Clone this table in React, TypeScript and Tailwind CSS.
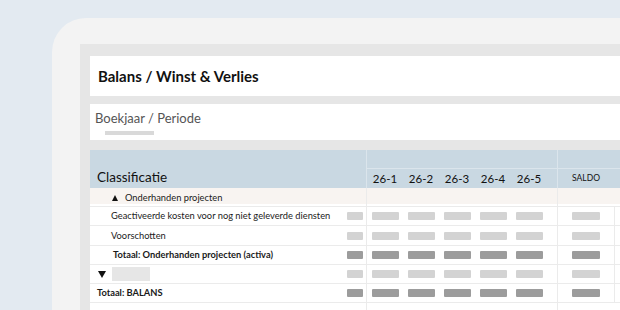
import React from "react";

const font = { fontFamily: "Lato, 'Open Sans', sans-serif" };

type Row = {
  kind: "group" | "item" | "total" | "collapsed" | "grand";
  label?: string;
  shade?: "light" | "dark";
  h: string;
};

const rows: Row[] = [
  { kind: "item", label: "Geactiveerde kosten voor nog niet geleverde diensten", shade: "light", h: "h-[18px]" },
  { kind: "item", label: "Voorschotten", shade: "light", h: "h-[19px]" },
  { kind: "total", label: "Totaal: Onderhanden projecten (activa)", shade: "dark", h: "h-[18px]" },
  { kind: "collapsed", shade: "light", h: "h-[18px]" },
  { kind: "grand", label: "Totaal: BALANS", shade: "dark", h: "h-[18px]" },
];

function Bar({ w, shade }: { w: string; shade: "light" | "dark" }) {
  return (
    <div
      className={`${w} h-[8px] rounded-[1px] ${shade === "dark" ? "bg-[#9c9c9c]" : "bg-[#d3d3d3]"}`}
    />
  );
}

function BodyRow({ row }: { row: Row }) {
  const shade = row.shade ?? "light";
  return (
    <div className={`flex ${row.h} box-content border-b border-[#ebebeb]`}>
      <div className="w-[277px] border-r border-[#ebebeb] flex items-center pr-[3px] shrink-0">
        {row.kind === "item" && (
          <span className="pl-[21px] text-[9.3px] text-[#1a1a1a] leading-none">{row.label}</span>
        )}
        {row.kind === "total" && (
          <span className="pl-[23px] text-[9.3px] font-bold text-[#1a1a1a] leading-none">{row.label}</span>
        )}
        {row.kind === "grand" && (
          <span className="pl-[7px] text-[9.3px] font-bold text-[#1a1a1a] leading-none">{row.label}</span>
        )}
        {row.kind === "collapsed" && (
          <div className="flex items-center pl-[8px]">
            <svg width="8" height="7" viewBox="0 0 8 7" className="mt-[1px]">
              <polygon points="0,0 8,0 4,7" fill="#111" />
            </svg>
            <div className="ml-[6px] w-[38px] h-[14px] bg-[#e6e6e6]" />
          </div>
        )}
        <div className="ml-auto">
          <Bar w="w-[16px]" shade={shade} />
        </div>
      </div>
      <div className="w-[191px] border-r border-[#ebebeb] flex items-center shrink-0">
        {[0, 1, 2, 3, 4].map((i) => (
          <div key={i} className="w-[36px] flex justify-center">
            <Bar w="w-[27px]" shade={shade} />
          </div>
        ))}
      </div>
      <div className="w-[56px] flex items-center justify-center shrink-0">
        <Bar w="w-[28px]" shade={shade} />
      </div>
      <div className="flex-1 border-l border-[#ebebeb]" />
    </div>
  );
}

export default function App() {
  return (
    <div
      className="w-[620px] h-[310px] overflow-hidden bg-[#e3eaf1] pl-[52px] pt-[18px] flex"
      style={font}
    >
      <div className="w-[700px] shrink-0 bg-[#f3f3f3] rounded-tl-[34px] pl-[28px] pt-[26px] flex">
        <div className="flex-1 bg-[#e6e6e6] pl-[10px] pt-[12px] flex flex-col min-w-0">
          <div className="bg-white h-[40px] flex items-center pl-[8px] shrink-0">
            <span className="text-[15px] font-bold text-[#111] leading-none">
              Balans / Winst &amp; Verlies
            </span>
          </div>
          <div className="bg-white h-[36px] mt-[8px] shrink-0 pl-[5px] pt-[8px] flex flex-col">
            <span className="text-[13px] text-[#555] leading-none">Boekjaar / Periode</span>
            <div className="ml-[10px] mt-[6px] w-[49px] h-[4px] bg-[#d9d9d9]" />
          </div>
          <div className="bg-white mt-[10px] flex-1 flex flex-col min-w-0">
            {/* header */}
            <div className="flex h-[38px] bg-[#c9d8e2] shrink-0">
              <div className="w-[277px] border-r border-[#dbe5ec] flex items-end pl-[7px] pb-[4px] shrink-0">
                <span className="text-[13.5px] text-[#111] leading-none">Classificatie</span>
              </div>
              <div className="w-[191px] border-r border-[#dbe5ec] flex flex-col shrink-0">
                <div className="h-[18px] border-b border-[#dbe5ec] box-content" />
                <div className="flex-1 flex items-center">
                  {["26-1", "26-2", "26-3", "26-4", "26-5"].map((l) => (
                    <div key={l} className="w-[36px] text-center text-[11.5px] text-[#111] leading-none">
                      {l}
                    </div>
                  ))}
                </div>
              </div>
              <div className="flex-1 flex flex-col">
                <div className="h-[18px] border-b border-[#dbe5ec] box-content" />
                <div className="flex-1 flex items-center">
                  <div className="w-[56px] text-center text-[8.5px] text-[#111] leading-none">SALDO</div>
                </div>
              </div>
            </div>
            {/* group row */}
            <div className="flex shrink-0 h-[18px] box-content border-b border-[#ebebeb]">
              <div className="w-[277px] border-r border-[#ebebeb] shrink-0 flex flex-col">
                <div className="h-[16px] bg-[#f8f4f1] flex items-center pl-[22px] pt-[4px]">
                  <svg width="6" height="6" viewBox="0 0 6 6">
                    <polygon points="3,0 6,6 0,6" fill="#111" />
                  </svg>
                  <span className="ml-[7px] text-[9.3px] text-[#1a1a1a] leading-none">Onderhanden projecten</span>
                </div>
              </div>
              <div className="w-[191px] border-r border-[#ebebeb] shrink-0 flex flex-col">
                <div className="h-[16px] bg-[#f8f4f1]" />
              </div>
              <div className="flex-1 flex flex-col">
                <div className="h-[16px] bg-[#f8f4f1]" />
              </div>
            </div>
            {rows.map((r, i) => (
              <BodyRow key={i} row={r} />
            ))}
            <div className="flex flex-1">
              <div className="w-[277px] border-r border-[#ebebeb] shrink-0" />
              <div className="w-[191px] border-r border-[#ebebeb] shrink-0" />
              <div className="flex-1" />
            </div>
          </div>
        </div>
      </div>
    </div>
  );
}
